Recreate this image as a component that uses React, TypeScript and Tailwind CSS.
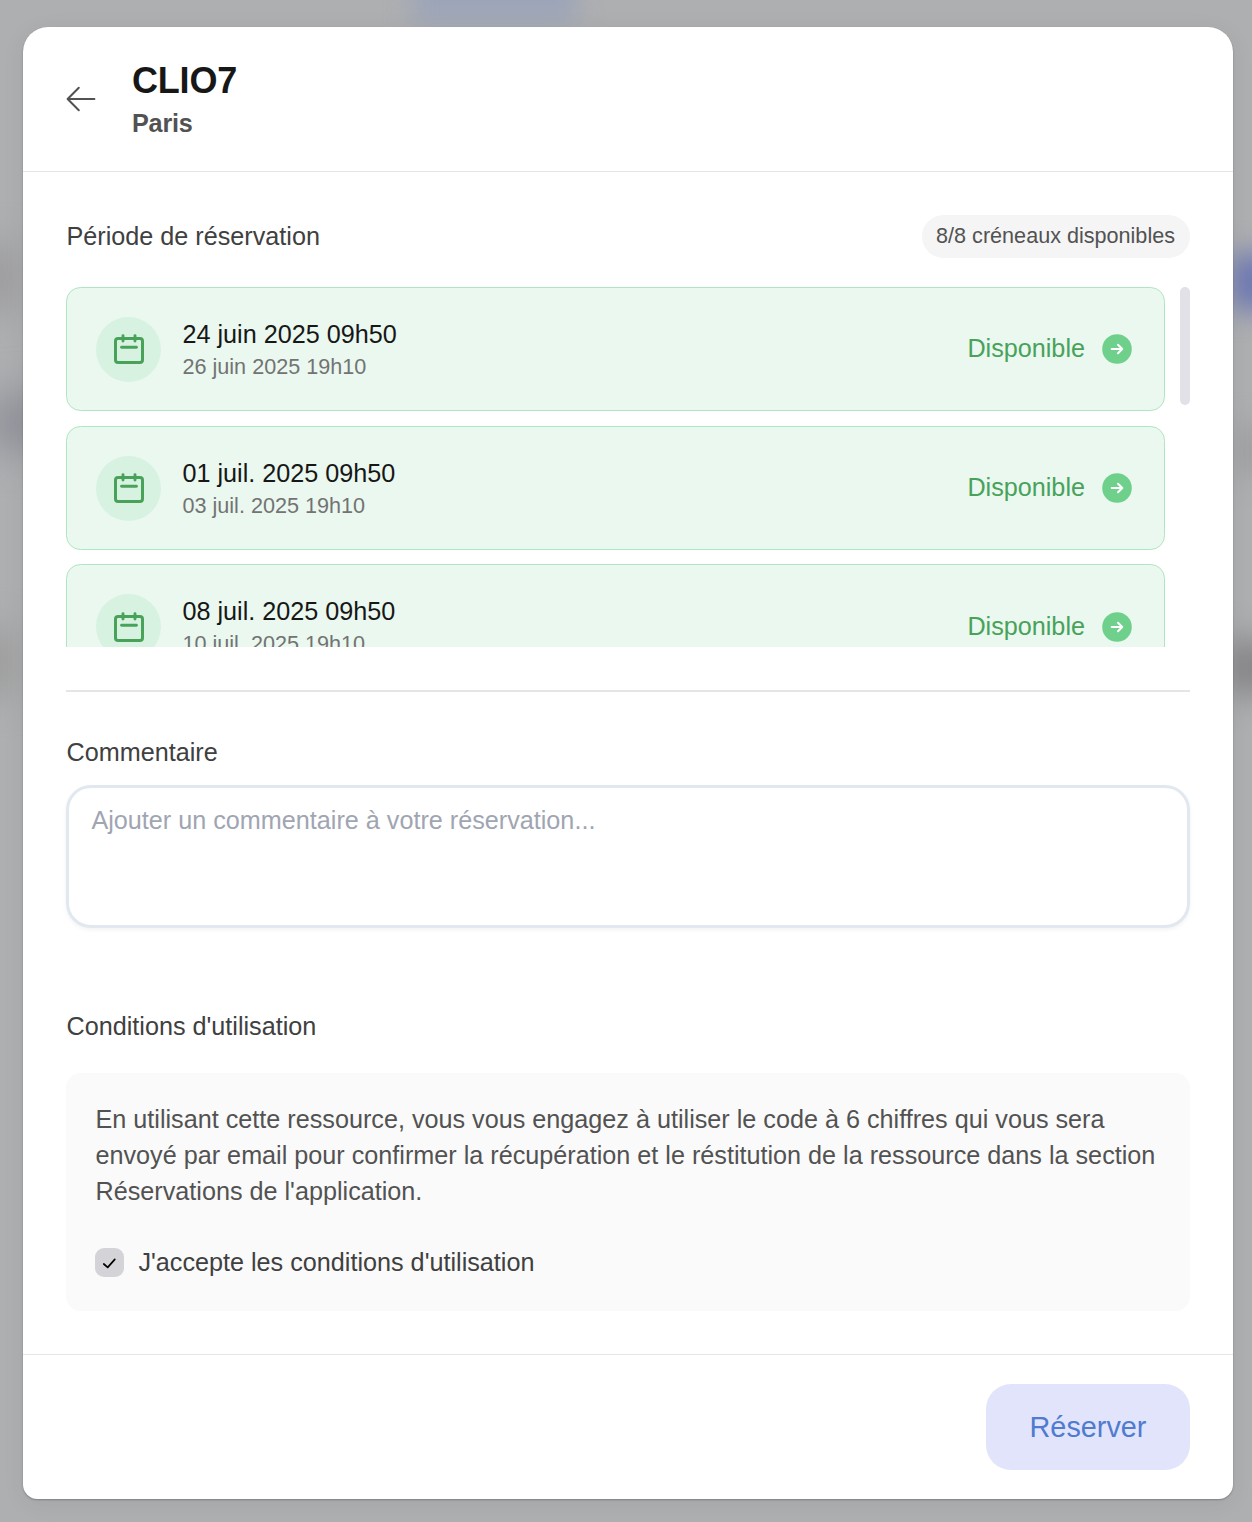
const slots = [
  { start: "24 juin 2025 09h50", end: "26 juin 2025 19h10" },
  { start: "01 juil. 2025 09h50", end: "03 juil. 2025 19h10" },
  { start: "08 juil. 2025 09h50", end: "10 juil. 2025 19h10" },
];

function BackIcon() {
  return (
    <svg className="h-[32px] w-[32px] stroke-[#525252]" viewBox="0 0 32 32" fill="none" strokeWidth="2" strokeLinecap="round" strokeLinejoin="round">
      <path d="M13.8 4.8 2.6 16l11.2 11.2M2.8 16h26.6" />
    </svg>
  );
}

function CalendarIcon() {
  return (
    <svg className="h-8 w-8" viewBox="0 0 32 32" fill="none" stroke="#48a259" strokeLinecap="round">
      <rect x="2.5" y="5.5" width="27" height="24" rx="2.6" strokeWidth="3" />
      <path d="M10 2.6v5.4M22 2.6v5.4" strokeWidth="2.9" />
      <path d="M8.6 14.2h14.8" strokeWidth="2.9" />
    </svg>
  );
}

function ArrowBadge() {
  return (
    <svg className="h-[30px] w-[30px]" viewBox="0 0 30 30" fill="none">
      <circle cx="15" cy="15" r="14.8" fill="#6fd08c" />
      <path d="M9.7 15h10.6M16 10.7l4.3 4.3-4.3 4.3" stroke="white" strokeWidth="2" strokeLinecap="round" strokeLinejoin="round" />
    </svg>
  );
}

function SlotCard({ start, end }: { start: string; end: string }) {
  return (
    <button className="flex h-[124.2px] w-full shrink-0 items-center rounded-[14.4px] border border-[#afe6c0] bg-[#eaf8ef] pt-[0.8px] pr-8 pl-[29px] text-left">
      <span className="flex size-[65px] items-center justify-center rounded-full bg-[#d8f2e1]">
        <CalendarIcon />
      </span>
      <span className="ml-[21.5px] flex flex-1 flex-col">
        <span className="text-[25.2px] leading-[35px] text-[#171717]">{start}</span>
        <span className="text-[21.6px] leading-[30px] text-[#737373]">{end}</span>
      </span>
      <span className="mr-[17px] pb-[2px] text-[25.2px] leading-9 text-[#48a259]">Disponible</span>
      <ArrowBadge />
    </button>
  );
}

function Backdrop() {
  return (
    <div className="absolute inset-0 overflow-hidden bg-[#aeafb1]">
      <div className="absolute -top-8 left-[412px] h-[56px] w-[165px] bg-[#9ca5b8] blur-[12px]" />
      <div className="absolute top-[245px] -left-8 h-[65px] w-[50px] bg-[#9b9b9d] blur-[18px]" />
      <div className="absolute top-[395px] -left-4 h-[55px] w-[80px] bg-[#90929a] blur-[20px]" />
      <div className="absolute top-[630px] -left-10 h-[65px] w-[56px] bg-[#9c9c9c] blur-[18px]" />
      <div className="absolute top-[254px] left-[1230px] h-[56px] w-[60px] bg-[#6c78b2] blur-[14px]" />
      <div className="absolute top-[425px] left-[1230px] h-[50px] w-[50px] bg-[#a0a1a3] blur-[14px]" />
      <div className="absolute top-[640px] left-[1224px] h-[54px] w-[60px] bg-[#868688] blur-[16px]" />
    </div>
  );
}

export default function App() {
  return (
    <main className="relative h-[1522px] w-[1252px] overflow-hidden px-[23px] pt-[27px] font-['Liberation_Sans',Arial,sans-serif]">
      <Backdrop />
      <section className="relative flex h-[1472px] w-[1210px] flex-col rounded-t-[25px] rounded-b-[14.4px] bg-white shadow-[0_1px_2px_rgba(0,0,0,0.25),0_4px_24px_rgba(0,0,0,0.06)]">
        <header className="flex h-[145px] shrink-0 items-center border-b border-[#e5e5e5] pl-[42px]">
          <BackIcon />
          <div className="ml-[35px] flex flex-col pb-[1px] font-bold">
            <h1 className="text-[36px] leading-[50px] tracking-[-0.2px] text-[#171717]">CLIO7</h1>
            <p className="text-[25.2px] leading-[35px] tracking-[-0.2px] text-[#525252]">Paris</p>
          </div>
        </header>

        <div className="flex flex-1 flex-col px-[43px] pt-[43px]">
          <div className="flex h-[43px] items-center justify-between">
            <h2 className="pl-[0.5px] text-[25.2px] text-[#404040]">Période de réservation</h2>
            <span className="flex h-[43px] items-center rounded-full bg-[#f5f5f5] pr-[15px] pl-[13.8px] text-[21.6px] text-[#525252]">
              8/8 créneaux disponibles
            </span>
          </div>

          <div className="mt-[29px] flex h-[360px] justify-between overflow-hidden">
            <div className="flex w-[1099px] flex-col gap-[14.4px]">
              {slots.map((slot) => (
                <SlotCard key={slot.start} {...slot} />
              ))}
            </div>
            <div className="h-[118px] w-[10px] rounded-full bg-[#e1e1e7]" />
          </div>

          <hr className="mt-[43px] border-t-2 border-[#e5e5e5]" />

          <label className="mt-[42px] pl-[0.5px] text-[25.2px] leading-9 text-[#404040]">Commentaire</label>
          <textarea
            className="mt-[15px] h-[143px] w-full resize-none rounded-[25px] border-[3px] border-[#e2e8f0] bg-white px-[22.4px] py-[14px] text-[25.2px] leading-9 shadow-[0_2px_4px_rgba(0,0,0,0.05)] placeholder:text-[#a0a5b2]"
            placeholder="Ajouter un commentaire à votre réservation..."
          />

          <h2 className="mt-[80px] pl-[0.5px] text-[25.2px] leading-9 text-[#404040]">Conditions d'utilisation</h2>
          <div className="mt-[29px] h-[238px] rounded-[14.4px] bg-[#fafafa] px-[29px] pt-[28px]">
            <p className="pl-[0.5px] text-[25.2px] leading-9 text-[#525252]">
              En utilisant cette ressource, vous vous engagez à utiliser le code à 6 chiffres qui vous sera
              <br />
              envoyé par email pour confirmer la récupération et le réstitution de la ressource dans la section
              <br />
              Réservations de l'application.
            </p>
            <label className="mt-[35px] flex items-center text-[25.2px] leading-9 text-[#404040]">
              <span className="mr-[14.4px] flex size-[29px] items-center justify-center rounded-[9px] bg-[#d4d4d8]">
                <svg className="size-[15px]" viewBox="0 0 15 15" fill="none" stroke="black" strokeWidth="1.7" strokeLinecap="round" strokeLinejoin="round">
                  <path d="m1.8 9 3.9 3.4 7.1-8" />
                </svg>
              </span>
              J'accepte les conditions d'utilisation
            </label>
          </div>
        </div>

        <footer className="flex h-[145px] items-center justify-end border-t border-[#e5e5e5] pr-[43px]">
          <button className="h-[86px] w-[204px] rounded-[25px] bg-[#e2e4fb] pt-[2px] text-[28.8px] text-[#4f7bd0]">Réserver</button>
        </footer>
      </section>
    </main>
  );
}
